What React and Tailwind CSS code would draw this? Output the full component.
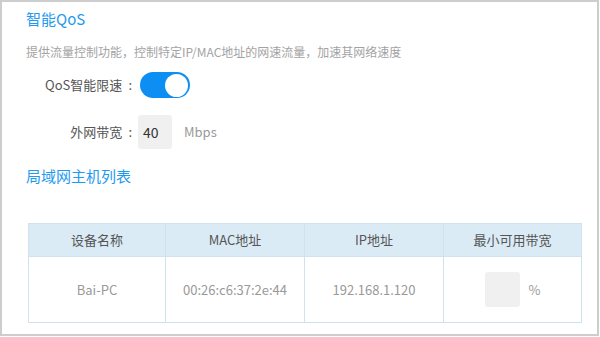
import React, { useState } from 'react'

const FONT = { fontFamily: '"Noto Sans CJK SC", "Noto Sans", sans-serif' }

const hosts = [
  { name: 'Bai-PC', mac: '00:26:c6:37:2e:44', ip: '192.168.1.120', min: '' }
]

const Toggle = ({ on, onChange }) => (
  <button
    onClick={() => onChange(!on)}
    className={`w-[50px] h-[26px] rounded-full flex items-center px-[2px] ${
      on ? 'bg-[#0d8ef3] justify-end' : 'bg-[#d5d5d5] justify-start'
    }`}
    aria-label="QoS智能限速"
  >
    <span className="block w-[23px] h-[23px] rounded-full bg-white" />
  </button>
)

const Label = ({ children }) => (
  <span className="w-[110px] flex justify-end text-[13px] text-[#555]">
    {children}
    <span className="ml-[6px] mr-[4px]">:</span>
  </span>
)

const App = () => {
  const [qosOn, setQosOn] = useState(true)
  const [bandwidth, setBandwidth] = useState('40')

  return (
    <div className="w-[600px] h-[337px] bg-white overflow-hidden" style={FONT}>
      <div className="w-[599px] h-[336px] border-2 border-[#cdcdcd] pl-[24px] pt-[6px]">
        <h2 className="text-[15px] leading-[22px] text-[#1e9af0]">智能QoS</h2>

        <p className="mt-[13px] text-[12px] leading-[18px] text-[#a3a3a3]">
          提供流量控制功能，控制特定IP/MAC地址的网速流量，加速其网络速度
        </p>

        <div className="mt-[11px] flex items-center h-[26px]">
          <Label>QoS智能限速</Label>
          <div className="ml-[4px]">
            <Toggle on={qosOn} onChange={setQosOn} />
          </div>
        </div>

        <div className="mt-[17px] flex items-center h-[34px]">
          <Label>外网带宽</Label>
          <input
            value={bandwidth}
            onChange={(e) => setBandwidth(e.target.value)}
            className="ml-[2px] w-[34px] h-[34px] rounded-[3px] bg-[#f0f0f0] pl-[5px] text-[14px] text-[#333] outline-none"
          />
          <span className="ml-[12px] text-[13px] text-[#999]">Mbps</span>
        </div>

        <h2 className="mt-[16px] text-[15px] leading-[22px] text-[#1e9af0]">局域网主机列表</h2>

        <table className="mt-[36px] ml-[2px] w-[553px] border-collapse border border-[#cfe2ef] table-fixed">
          <thead>
            <tr className="bg-[#dbebf6] h-[33px] text-[13px] text-[#555]">
              <th className="w-[137px] font-normal border border-[#cfe2ef]">设备名称</th>
              <th className="w-[139px] font-normal border border-[#cfe2ef]">MAC地址</th>
              <th className="w-[139px] font-normal border border-[#cfe2ef]">IP地址</th>
              <th className="w-[138px] font-normal border border-[#cfe2ef]">最小可用带宽</th>
            </tr>
          </thead>
          <tbody>
            {hosts.map((h) => (
              <tr key={h.mac} className="h-[66px] text-[13px] text-[#999]">
                <td className="text-center border border-[#cfe2ef]">{h.name}</td>
                <td className="text-center border border-[#cfe2ef]">{h.mac}</td>
                <td className="text-center border border-[#cfe2ef]">{h.ip}</td>
                <td className="border border-[#cfe2ef]">
                  <div className="flex items-center justify-center gap-[9px]">
                    <input
                      defaultValue={h.min}
                      className="w-[35px] h-[35px] rounded-[3px] bg-[#f0f0f0] outline-none"
                    />
                    <span className="text-[13px] text-[#999]">%</span>
                  </div>
                </td>
              </tr>
            ))}
          </tbody>
        </table>
      </div>
    </div>
  )
}

export default App
